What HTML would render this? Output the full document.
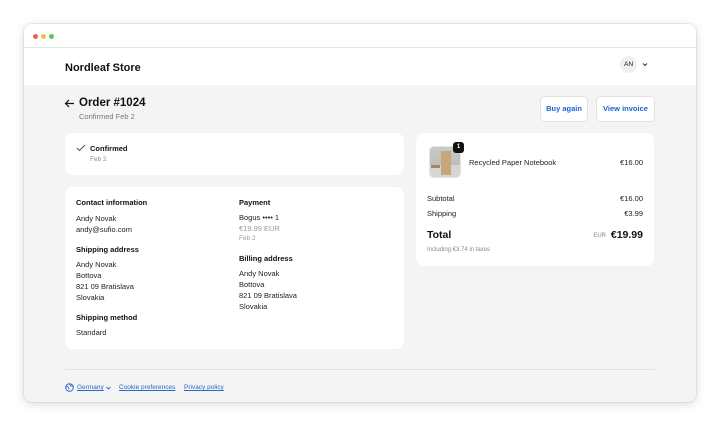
<!DOCTYPE html>
<html><head><meta charset="utf-8"><style>
*{margin:0;padding:0;box-sizing:border-box}
body{width:720px;height:426px;background:#fff;font-family:"Liberation Sans",Arial,sans-serif;color:#111;position:relative;overflow:hidden}
.win{position:absolute;left:24px;top:24px;width:672px;height:378px;border-radius:8px;background:#f4f4f4;box-shadow:0 2px 10px rgba(0,0,0,.15),0 0 0 1px rgba(0,0,0,.06);overflow:hidden}
.tb{position:absolute;left:0;top:0;width:100%;height:24px;background:#fff;border-bottom:1px solid #e4e4e4}
.dot{position:absolute;top:10px;width:5px;height:5px;border-radius:50%}
.hd{position:absolute;left:0;top:24px;width:100%;height:37px;background:#fff}
.a{position:absolute;white-space:nowrap}
.card{position:absolute;background:#fff;border-radius:8px}
.s{font-size:7.5px;color:#222}
.b{font-weight:bold;font-size:7.5px;color:#111}
.g{color:#8a8a8a}
.btn{position:absolute;top:72px;height:26px;background:#fff;border:1px solid #e3e3e3;border-radius:5px;color:#1a62d6;font-weight:bold;font-size:7.5px;text-align:center;line-height:24px}
.lk{color:#2b66c8;text-decoration:underline;font-size:6.5px}
</style></head><body>
<div class="win">
 <div class="tb">
  <div class="dot" style="left:9px;background:#ec5f57"></div>
  <div class="dot" style="left:17px;background:#f3bd3e"></div>
  <div class="dot" style="left:25px;background:#5fc553"></div>
 </div>
 <div class="hd">
  <div class="a" style="left:41px;top:14px;font-size:11px;font-weight:bold">Nordleaf Store</div>
  <div class="a" style="left:596px;top:8px;width:17px;height:17px;border-radius:50%;background:#f0f0f0;font-size:6.5px;line-height:17px;text-align:center">AN</div>
  <svg class="a" style="left:618px;top:14px" width="6" height="5" viewBox="0 0 6 5"><path d="M1 1.5 L3 3.5 L5 1.5" stroke="#333" stroke-width="1" fill="none"/></svg>
 </div>
 <svg class="a" style="left:40px;top:75px" width="11" height="9" viewBox="0 0 11 9"><path d="M10 4.5H1.5M5 1L1.5 4.5L5 8" stroke="#111" stroke-width="1.2" fill="none"/></svg>
 <div class="a" style="left:55px;top:73px;font-size:11.5px;font-weight:bold">Order #1024</div>
 <div class="a g" style="left:55px;top:88px;font-size:7.5px;color:#777">Confirmed Feb 2</div>
 <div class="btn" style="left:516px;width:48px">Buy again</div>
 <div class="btn" style="left:572px;width:59px">View invoice</div>

 <div class="card" style="left:41px;top:109px;width:339px;height:42px">
  <svg class="a" style="left:11px;top:11px" width="10" height="8" viewBox="0 0 10 8"><path d="M1 4L3.5 6.5L9 1" stroke="#555" stroke-width="1" fill="none"/></svg>
  <div class="a b" style="left:25px;top:11px">Confirmed</div>
  <div class="a" style="left:25px;top:23px;font-size:6.5px;color:#888">Feb 2</div>
 </div>

 <div class="card" style="left:41px;top:163px;width:339px;height:162px">
  <div class="a b" style="left:11px;top:11px">Contact information</div>
  <div class="a s" style="left:11px;top:26px;line-height:11px">Andy Novak<br>andy@sufio.com</div>
  <div class="a b" style="left:11px;top:58px">Shipping address</div>
  <div class="a s" style="left:11px;top:72px;line-height:11px">Andy Novak<br>Bottova<br>821 09 Bratislava<br>Slovakia</div>
  <div class="a b" style="left:11px;top:126px">Shipping method</div>
  <div class="a s" style="left:11px;top:141px">Standard</div>
  <div class="a b" style="left:174px;top:11px">Payment</div>
  <div class="a s" style="left:174px;top:26px">Bogus •••• 1</div>
  <div class="a s" style="left:174px;top:37px;color:#999">€19.99 EUR</div>
  <div class="a" style="left:174px;top:48px;font-size:6.5px;color:#999">Feb 2</div>
  <div class="a b" style="left:174px;top:67px">Billing address</div>
  <div class="a s" style="left:174px;top:81px;line-height:11px">Andy Novak<br>Bottova<br>821 09 Bratislava<br>Slovakia</div>
 </div>

 <div class="card" style="left:392px;top:109px;width:238px;height:133px">
  <div class="a" style="left:13px;top:13px;width:32px;height:32px;border-radius:5px;border:1px solid #e5e5e5;overflow:hidden;background:linear-gradient(#c9c9c7 0,#bdbdbb 60%,#d8d6d2 60%)">
   <div style="position:absolute;left:11px;top:4px;width:10px;height:24px;background:#c7a679"></div>
   <div style="position:absolute;left:1px;top:18px;width:9px;height:3px;background:#a08766"></div>
  </div>
  <div class="a" style="left:37px;top:9px;width:11px;height:11px;border-radius:3px;background:#111;color:#fff;font-size:6px;font-weight:bold;text-align:center;line-height:11px">1</div>
  <div class="a s" style="left:53px;top:25px">Recycled Paper Notebook</div>
  <div class="a s" style="right:11px;top:25px">€16.00</div>
  <div class="a s" style="left:11px;top:61px">Subtotal</div>
  <div class="a s" style="right:11px;top:61px">€16.00</div>
  <div class="a s" style="left:11px;top:76px">Shipping</div>
  <div class="a s" style="right:11px;top:76px">€3.99</div>
  <div class="a" style="left:11px;top:96px;font-size:10.5px;font-weight:bold">Total</div>
  <div class="a" style="right:48px;top:100px;font-size:6px;color:#888">EUR</div>
  <div class="a" style="right:11px;top:96px;font-size:10.5px;font-weight:bold">€19.99</div>
  <div class="a" style="left:11px;top:114px;font-size:6px;color:#888">Including €3.74 in taxes</div>
 </div>

 <div class="a" style="left:41px;top:345px;width:590px;height:1px;background:#e2e2e2"></div>
 <svg class="a" style="left:41px;top:359px" width="9" height="9" viewBox="0 0 9 9"><circle cx="4.5" cy="4.5" r="3.8" stroke="#2b66c8" stroke-width="1" fill="none"/><path d="M1.5 3Q4 4 4 6.5M7.5 3Q5 3.5 5 1" stroke="#2b66c8" stroke-width="0.9" fill="none"/></svg>
 <div class="a lk" style="left:53px;top:360px">Germany</div>
 <svg class="a" style="left:82px;top:362px" width="5" height="4" viewBox="0 0 5 4"><path d="M0.5 1L2.5 3L4.5 1" stroke="#2b66c8" stroke-width="0.9" fill="none"/></svg>
 <div class="a lk" style="left:95px;top:360px">Cookie preferences</div>
 <div class="a lk" style="left:160px;top:360px">Privacy policy</div>
</div>
</body></html>
